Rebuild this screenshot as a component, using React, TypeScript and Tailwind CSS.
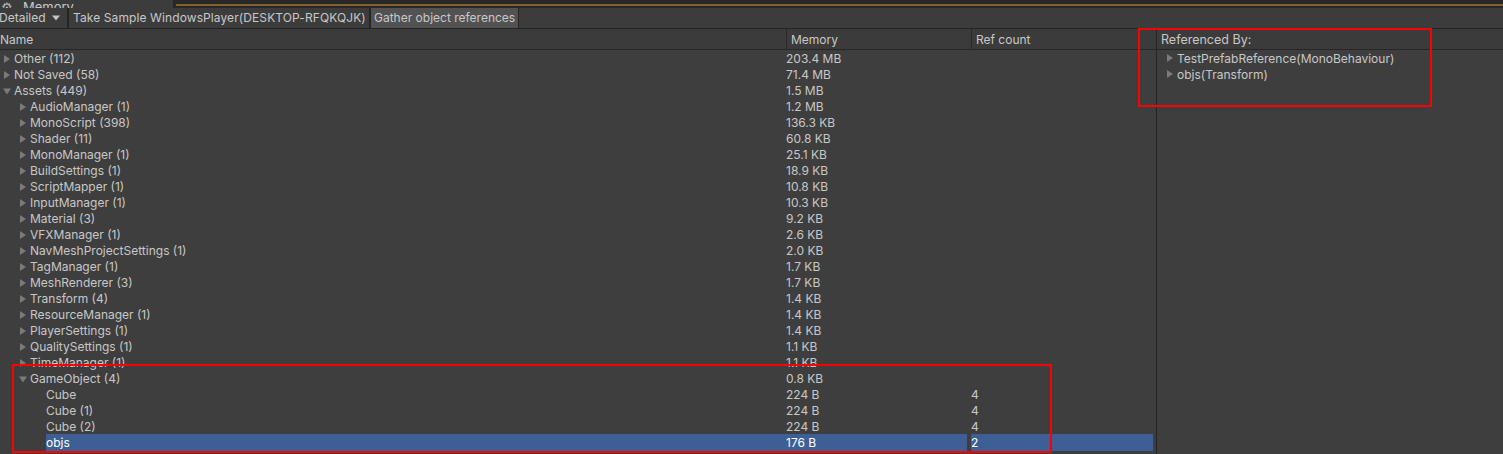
import React from 'react'

type Row = {
  name: string
  mem: string
  refs?: string
  depth: number
  arrow?: 'right' | 'down'
  selected?: boolean
}

const rows: Row[] = [
  { name: 'Other (112)', mem: '203.4 MB', depth: 0, arrow: 'right' },
  { name: 'Not Saved (58)', mem: '71.4 MB', depth: 0, arrow: 'right' },
  { name: 'Assets (449)', mem: '1.5 MB', depth: 0, arrow: 'down' },
  { name: 'AudioManager (1)', mem: '1.2 MB', depth: 1, arrow: 'right' },
  { name: 'MonoScript (398)', mem: '136.3 KB', depth: 1, arrow: 'right' },
  { name: 'Shader (11)', mem: '60.8 KB', depth: 1, arrow: 'right' },
  { name: 'MonoManager (1)', mem: '25.1 KB', depth: 1, arrow: 'right' },
  { name: 'BuildSettings (1)', mem: '18.9 KB', depth: 1, arrow: 'right' },
  { name: 'ScriptMapper (1)', mem: '10.8 KB', depth: 1, arrow: 'right' },
  { name: 'InputManager (1)', mem: '10.3 KB', depth: 1, arrow: 'right' },
  { name: 'Material (3)', mem: '9.2 KB', depth: 1, arrow: 'right' },
  { name: 'VFXManager (1)', mem: '2.6 KB', depth: 1, arrow: 'right' },
  { name: 'NavMeshProjectSettings (1)', mem: '2.0 KB', depth: 1, arrow: 'right' },
  { name: 'TagManager (1)', mem: '1.7 KB', depth: 1, arrow: 'right' },
  { name: 'MeshRenderer (3)', mem: '1.7 KB', depth: 1, arrow: 'right' },
  { name: 'Transform (4)', mem: '1.4 KB', depth: 1, arrow: 'right' },
  { name: 'ResourceManager (1)', mem: '1.4 KB', depth: 1, arrow: 'right' },
  { name: 'PlayerSettings (1)', mem: '1.4 KB', depth: 1, arrow: 'right' },
  { name: 'QualitySettings (1)', mem: '1.1 KB', depth: 1, arrow: 'right' },
  { name: 'TimeManager (1)', mem: '1.1 KB', depth: 1, arrow: 'right' },
  { name: 'GameObject (4)', mem: '0.8 KB', depth: 1, arrow: 'down' },
  { name: 'Cube', mem: '224 B', refs: '4', depth: 2 },
  { name: 'Cube (1)', mem: '224 B', refs: '4', depth: 2 },
  { name: 'Cube (2)', mem: '224 B', refs: '4', depth: 2 },
  { name: 'objs', mem: '176 B', refs: '2', depth: 2, selected: true },
]

const referencedBy = ['TestPrefabReference(MonoBehaviour)', 'objs(Transform)']

function Arrow({ dir }: { dir: 'right' | 'down' }) {
  return (
    <svg width="8" height="8" viewBox="0 0 8 8" className="shrink-0">
      {dir === 'right' ? (
        <path d="M1 0 L7 4 L1 8 Z" fill="#7a7a7a" />
      ) : (
        <path d="M0 1.5 L8 1.5 L4 7.5 Z" fill="#7a7a7a" />
      )}
    </svg>
  )
}

function TreeRow({ row }: { row: Row }) {
  const indent = row.depth === 0 ? 'pl-[3px]' : row.depth === 1 ? 'pl-[19px]' : 'pl-[46px]'
  const sel = row.selected ? 'bg-[#3e5f96] text-white' : ''
  return (
    <div className="grid h-[16px] grid-cols-[786px_185px_1fr] leading-[17px]">
      <div className={`flex h-full items-center ${indent}`}>
        {row.arrow ? (
          <>
            <Arrow dir={row.arrow} />
            <span className="ml-[3px] whitespace-nowrap">{row.name}</span>
          </>
        ) : (
          <span className={`h-full flex-1 whitespace-nowrap ${sel}`}>{row.name}</span>
        )}
      </div>
      <div className={`mr-[4px] h-full whitespace-nowrap ${sel}`}>{row.mem}</div>
      <div className={`mr-[3px] h-full ${sel}`}>{row.refs}</div>
    </div>
  )
}

export default function App() {
  return (
    <div
      className="relative h-[454px] w-[1503px] overflow-hidden bg-[#3e3e3e] text-[12px] text-[#c8c8c8]"
      style={{ fontFamily: 'Inter, "Noto Sans", sans-serif' }}
    >
      {/* window tab strip, tab title mostly scrolled out of view */}
      <div className="flex h-[8px] bg-[#282828]">
        <div className="flex w-[173px] items-end overflow-hidden bg-[#3c3c3c]">
          <div className="-mb-[6px] flex items-center gap-[10px] pl-[1px] text-[13px] leading-[14px]">
            <span className="text-[#bdbdbd]">⚙</span>
            <span>Memory</span>
          </div>
        </div>
        <div className="ml-[3px] flex-1 pt-[4px]">
          <div className="h-[2px] bg-[#85612f]" />
        </div>
      </div>

      {/* toolbar */}
      <div className="flex h-[21px] items-stretch border-b border-[#232323] bg-[#3c3c3c]">
        <div className="flex w-[67px] items-center justify-between pr-[7px]">
          <span className="-ml-[1px]">Detailed</span>
          <svg width="8" height="6" viewBox="0 0 8 6">
            <path d="M0 0.5 L8 0.5 L4 5.5 Z" fill="#c4c4c4" />
          </svg>
        </div>
        <div className="w-[2px] bg-[#262626]" />
        <div className="flex w-[302px] items-center whitespace-nowrap border-r-2 border-[#262626] pl-[4px] tracking-[0.1px]">
          Take Sample WindowsPlayer(DESKTOP-RFQKQJK)
        </div>
        <div className="flex w-[148px] items-center whitespace-nowrap border-r border-[#262626] bg-[#525252] pb-[1px] pl-[3px]">
          Gather object references
        </div>
      </div>

      <div className="flex h-[425px]">
        {/* left tree */}
        <div className="w-[1156px] shrink-0">
          <div className="grid h-[21px] grid-cols-[786px_185px_1fr] border-b border-[#262626] bg-[#3b3b3b] leading-[21px]">
            <div>Name</div>
            <div className="h-full border-l border-[#2a2a2a] pl-[4px]">Memory</div>
            <div className="h-full border-l border-[#2a2a2a] pl-[4px]">Ref count</div>
          </div>
          {rows.map((row) => (
            <TreeRow key={row.name} row={row} />
          ))}
        </div>

        {/* right panel */}
        <div className="flex-1 border-l border-[#232323]">
          <div className="h-[21px] border-b border-[#262626] bg-[#3b3b3b] pl-[4px] text-[12.5px] leading-[21px]">
            Referenced By:
          </div>
          {referencedBy.map((item) => (
            <div key={item} className="flex h-[16px] items-center pl-[9px] leading-[17px]">
              <Arrow dir="right" />
              <span className="ml-[3px] whitespace-nowrap">{item}</span>
            </div>
          ))}
        </div>
      </div>

      {/* annotation boxes */}
      <div className="pointer-events-none absolute left-[1138px] top-[28px] h-[79px] w-[294px] border-2 border-[#ff0000]" />
      <div className="pointer-events-none absolute left-[12px] top-[364px] h-[89px] w-[1040px] border-2 border-[#ff0000]" />
    </div>
  )
}
